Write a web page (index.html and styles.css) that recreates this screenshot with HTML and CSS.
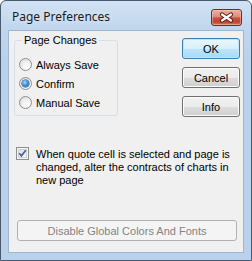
FILE: index.html
```html
<!DOCTYPE html>
<html>
<head>
<meta charset="utf-8">
<link rel="stylesheet" href="styles.css">
</head>
<body>
<div class="window">
  <div class="titlebar">
    <span class="title">Page Preferences</span>
    <span class="close">
      <svg width="31" height="17" viewBox="0 0 31 17">
        <path d="M11 5.5 L20 11.5 M20 5.5 L11 11.5" stroke="#5b1d16" stroke-width="4.2" stroke-linecap="round" fill="none"/>
        <path d="M11 5.5 L20 11.5 M20 5.5 L11 11.5" stroke="#ffffff" stroke-width="2.2" stroke-linecap="round" fill="none"/>
      </svg>
    </span>
  </div>
  <div class="client">
    <div class="top">
      <fieldset class="group">
        <legend class="legend">Page Changes</legend>
        <label class="radio"><span class="rb"></span>Always Save</label>
        <label class="radio"><span class="rb on"></span>Confirm</label>
        <label class="radio"><span class="rb"></span>Manual Save</label>
      </fieldset>
      <div class="buttons">
        <button class="btn default">OK</button>
        <button class="btn">Cancel</button>
        <button class="btn">Info</button>
      </div>
    </div>
    <div class="check-row">
      <span class="cb">
        <svg width="13" height="13" viewBox="0 0 13 13">
          <defs>
            <linearGradient id="cbg" x1="0" y1="0" x2="1" y2="1">
              <stop offset="0" stop-color="#dcdcdc"/>
              <stop offset="1" stop-color="#fbfbfb"/>
            </linearGradient>
          </defs>
          <rect x="0.5" y="0.5" width="12" height="12" fill="#f4f4f4" stroke="#8e8f8f"/>
          <rect x="2.5" y="2.5" width="8" height="8" fill="url(#cbg)" stroke="#cfd3d6"/>
          <path d="M3.2 6.3 L5.4 8.8 L9.8 3.2" stroke="#4a5f9c" stroke-width="1.7" fill="none"/>
        </svg>
      </span>
      <span class="check-text">When quote cell is selected and page is changed, alter the contracts of charts in new page</span>
    </div>
    <button class="btn wide" disabled>Disable Global Colors And Fonts</button>
  </div>
</div>
</body>
</html>
```

FILE: styles.css
```css
* { box-sizing: border-box; }

html, body {
  margin: 0;
  padding: 0;
  background: #ffffff;
}

.window {
  width: 252px;
  height: 261px;
  border: 1px solid #4a5a6e;
  border-radius: 6px 6px 0 0;
  background: linear-gradient(#d1e2f4 0px, #c0d6ee 28px, #b9d1ea 60px, #b9d1ea 100%);
  padding: 0 7px 7px 7px;
  display: flex;
  flex-direction: column;
  font-family: "Liberation Sans", Arial, sans-serif;
  font-size: 11px;
  color: #000;
}

.titlebar {
  height: 29px;
  display: flex;
  justify-content: space-between;
  align-items: flex-start;
  flex: none;
}

.title {
  font-family: "Noto Sans", "Open Sans", sans-serif;
  font-size: 12px;
  line-height: 16px;
  margin-top: 8px;
  margin-left: 4px;
  color: #1b1b1b;
  text-shadow: 0 0 6px rgba(255, 255, 255, 0.7);
}

.close {
  width: 31px;
  height: 17px;
  margin-top: 8px;
  margin-right: 2px;
  border: 1px solid #6e2b25;
  border-radius: 3px;
  background: linear-gradient(#eab0a3 0%, #dd8d7b 45%, #c95440 52%, #c0442f 80%, #d77a63 100%);
  box-shadow: inset 0 0 0 1px rgba(255, 210, 200, 0.45);
  display: flex;
  align-items: center;
  justify-content: center;
}

.close svg { display: block; margin: -1px; }

.client {
  flex: 1;
  background: #f0f0f0;
  border: 1px solid #9fb6d0;
  display: flex;
  flex-direction: column;
  align-items: flex-start;
}

.top {
  align-self: stretch;
  display: flex;
  justify-content: space-between;
  align-items: flex-start;
  padding: 3px 3px 0 5px;
}

.group {
  width: 104px;
  margin: 0;
  padding: 8px 0 3px 4px;
  border: 1px solid #d5dfe5;
  border-radius: 3px;
  display: flex;
  flex-direction: column;
}

.legend {
  padding: 0 2px;
  margin-left: 3px;
  line-height: 13px;
  color: #000;
}

.radio {
  height: 19px;
  display: flex;
  align-items: center;
  gap: 4px;
  white-space: nowrap;
}

.rb {
  width: 13px;
  height: 13px;
  border-radius: 50%;
  border: 1px solid #8e8f8f;
  background: radial-gradient(circle at 65% 70%, #ffffff 0%, #f2f2f2 40%, #d4d4d4 100%);
  display: flex;
  align-items: center;
  justify-content: center;
  flex: none;
}

.rb.on::after {
  content: "";
  width: 7px;
  height: 7px;
  border-radius: 50%;
  background: radial-gradient(circle at 40% 35%, #a8dcfa 0%, #3f93d6 45%, #1b5a98 100%);
  box-shadow: 0 0 0 0.5px #1d4d7e;
}

.buttons {
  margin-top: 4px;
  display: flex;
  flex-direction: column;
  gap: 8px;
}

.btn {
  width: 58px;
  height: 21px;
  padding: 0;
  font-family: "Liberation Sans", Arial, sans-serif;
  font-size: 11px;
  color: #000;
  border: 1px solid #707070;
  border-radius: 3px;
  background: linear-gradient(#f2f2f2 0%, #ebebeb 50%, #dddddd 51%, #cfcfcf 100%);
  box-shadow: inset 0 0 0 1px #fbfbfb;
}

.btn.default {
  border-color: #3c7fb1;
  background: linear-gradient(#eaf6fd 0%, #d9f0fc 50%, #bee6fd 51%, #a7d9f5 100%);
  box-shadow: inset 0 0 0 1px #bde6fb;
}

.check-row {
  margin-top: 30px;
  padding-left: 7px;
  display: flex;
  align-items: flex-start;
}

.cb {
  width: 13px;
  height: 13px;
  flex: none;
}

.cb svg { display: block; }

.check-text {
  margin-left: 7px;
  margin-top: 1px;
  width: 198px;
  line-height: 13px;
}

.btn.wide {
  width: 220px;
  height: 21px;
  margin-top: 33px;
  margin-left: 8px;
  color: #838383;
  border-color: #adb2b5;
  background: #f4f4f4;
  box-shadow: none;
}
```
